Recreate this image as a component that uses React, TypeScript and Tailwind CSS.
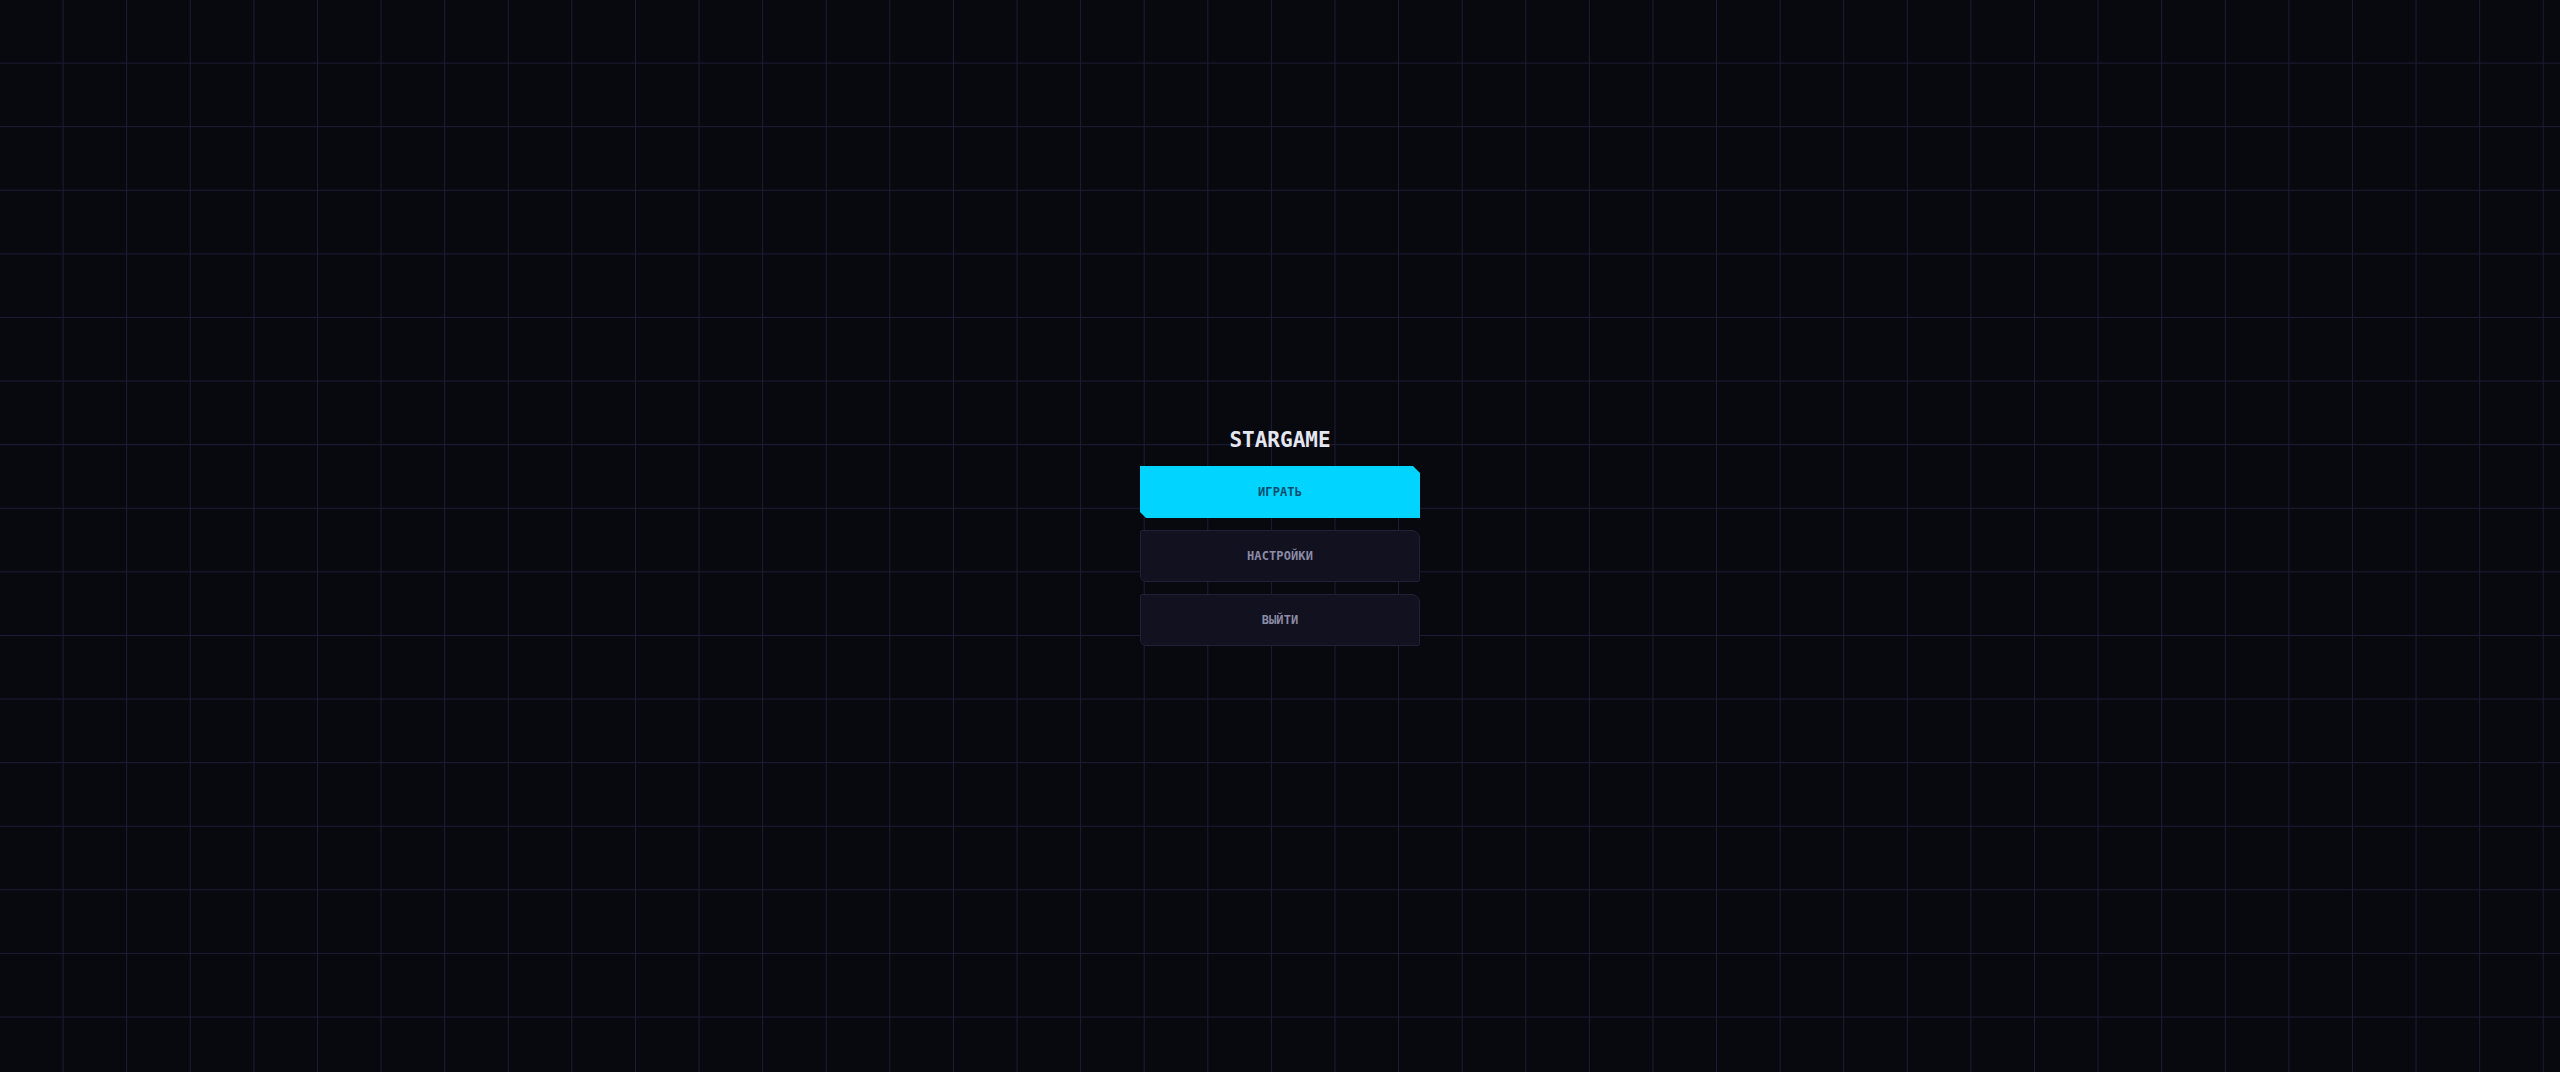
import React from 'react';

const menuItems = [
  { id: 'play', label: 'ИГРАТЬ', primary: true },
  { id: 'settings', label: 'НАСТРОЙКИ', primary: false },
  { id: 'exit', label: 'ВЫЙТИ', primary: false },
];

export default function App() {
  return (
    <div className="min-h-screen w-full bg-[#08080f] bg-[image:linear-gradient(to_left,#1c1c35_1px,transparent_1px),linear-gradient(to_top,#1c1c35_1px,transparent_1px)] bg-[size:63.6px_63.6px] flex items-center justify-center font-['DejaVu_Sans_Mono',monospace]">
      {/* Main menu */}
      <div className="flex flex-col items-center w-[280px]">
        <h1 className="text-[21px] leading-[28px] font-bold text-[#e4e6f0] mb-3">
          STARGAME
        </h1>
        <div className="flex flex-col gap-3 w-full">
          {menuItems.map((item) => (
            <button
              key={item.id}
              type="button"
              className={`h-[52px] w-full text-[12px] font-bold uppercase tracking-[0.01em] ${
                item.primary
                  ? 'bg-[#00d4ff] text-[#0b4d6e] [clip-path:polygon(0_0,calc(100%-7px)_0,100%_7px,100%_100%,6px_100%,0_calc(100%-6px))]'
                  : 'bg-[#111120] text-[#8c8ca6] border border-[#1f1f35] rounded-tr-[8px] rounded-bl-[6px] rounded-tl-[2px] rounded-br-[2px]'
              }`}
            >
              {item.label}
            </button>
          ))}
        </div>
      </div>
    </div>
  );
}
